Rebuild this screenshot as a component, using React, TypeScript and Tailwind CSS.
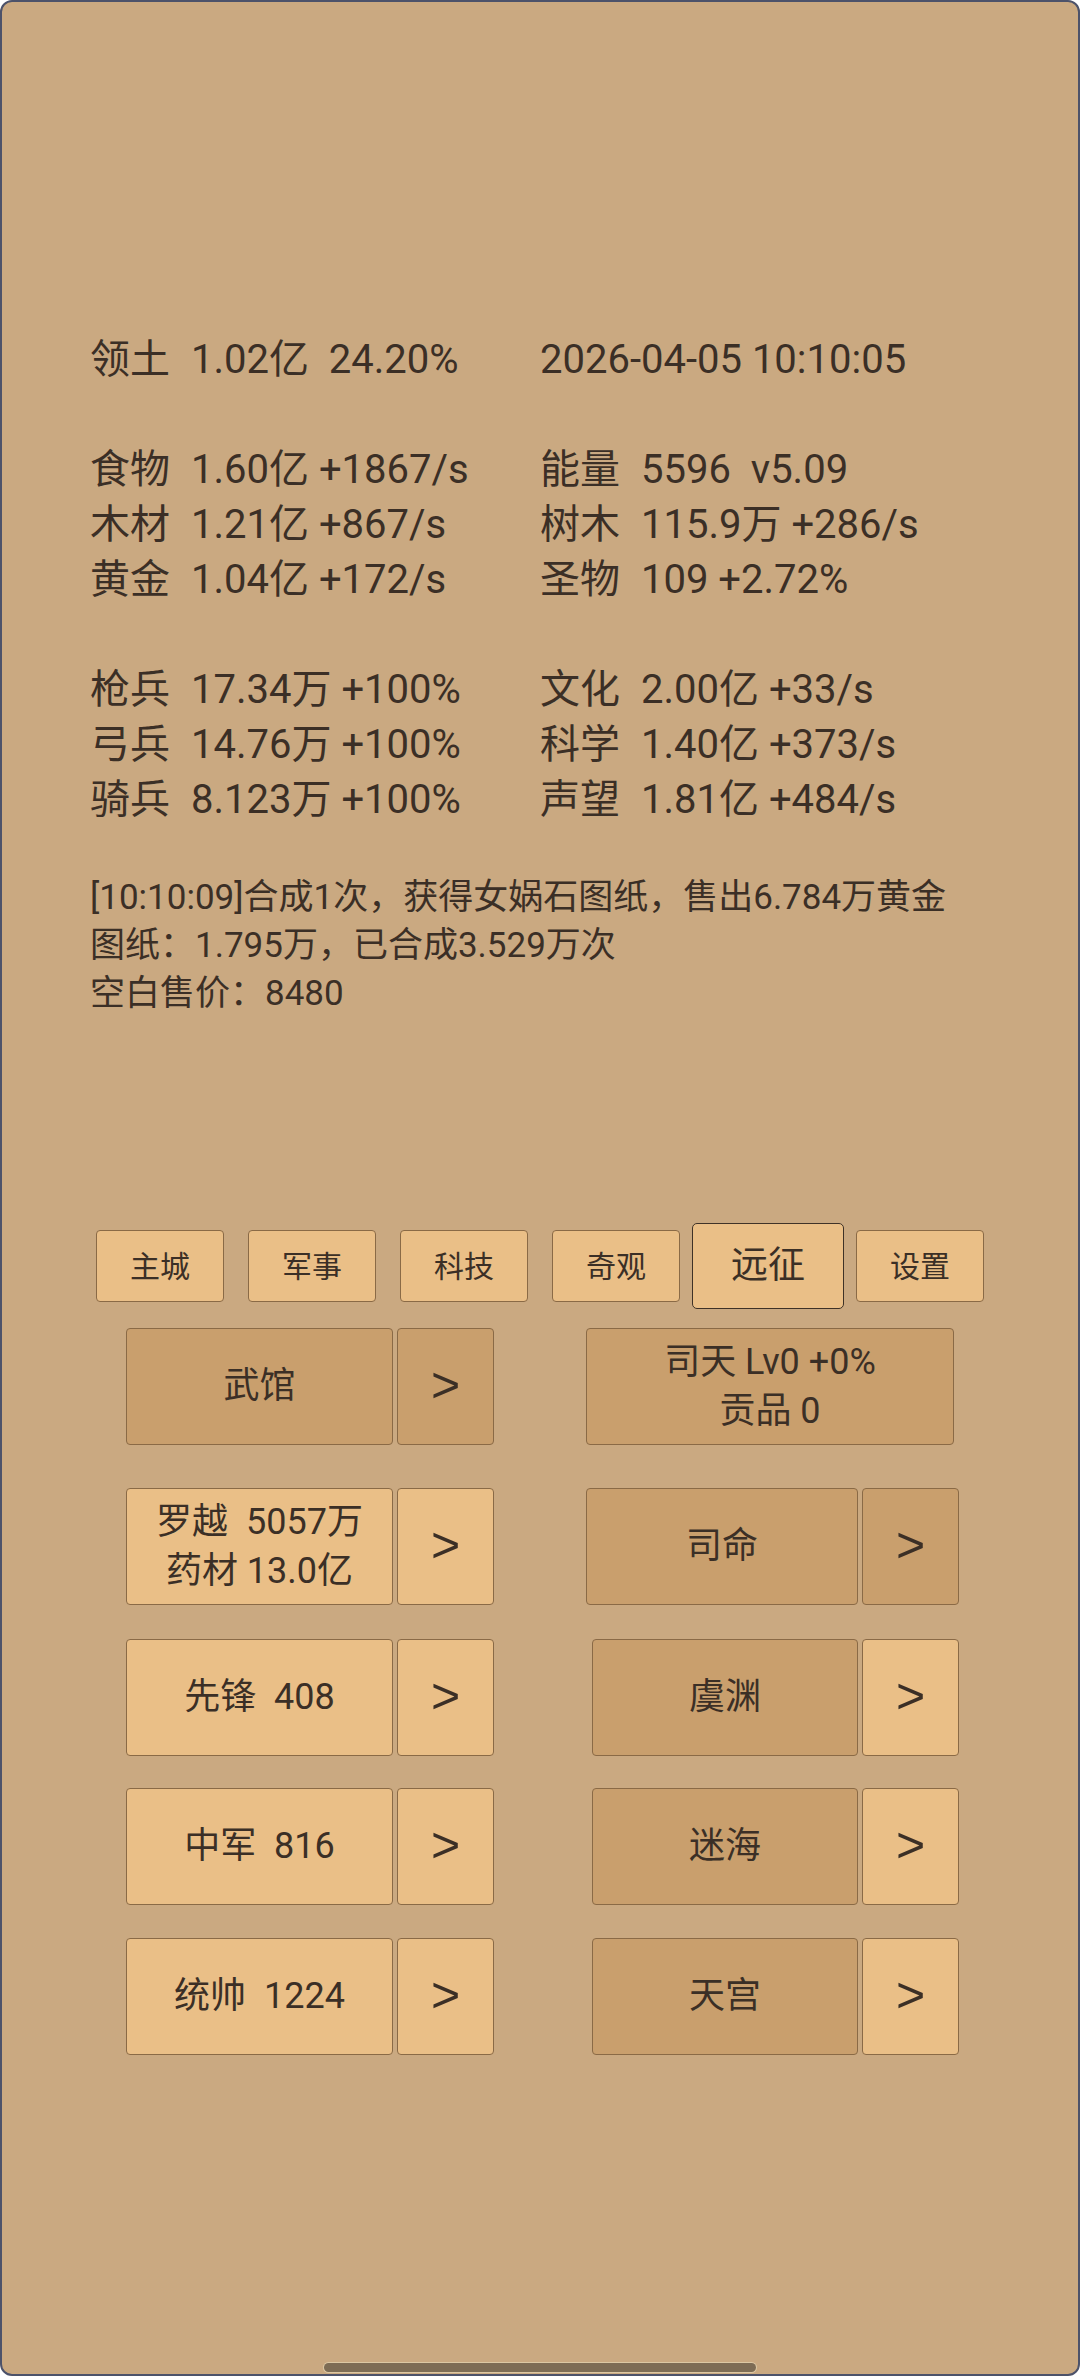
import React from "react";

type Cell = { label: string; value: string } | null;

const statLines: ([Cell, Cell] | null)[] = [
  [{ label: "领土", value: "1.02亿  24.20%" }, { label: "", value: "2026-04-05 10:10:05" }],
  null,
  [{ label: "食物", value: "1.60亿 +1867/s" }, { label: "能量", value: "5596  v5.09" }],
  [{ label: "木材", value: "1.21亿 +867/s" }, { label: "树木", value: "115.9万 +286/s" }],
  [{ label: "黄金", value: "1.04亿 +172/s" }, { label: "圣物", value: "109 +2.72%" }],
  null,
  [{ label: "枪兵", value: "17.34万 +100%" }, { label: "文化", value: "2.00亿 +33/s" }],
  [{ label: "弓兵", value: "14.76万 +100%" }, { label: "科学", value: "1.40亿 +373/s" }],
  [{ label: "骑兵", value: "8.123万 +100%" }, { label: "声望", value: "1.81亿 +484/s" }],
];

function StatCell({ c }: { c: Cell }) {
  if (!c) return null;
  return (
    <div className="flex whitespace-pre">
      {c.label ? <span className="inline-block w-[101px]">{c.label}</span> : null}
      <span>{c.value}</span>
    </div>
  );
}

const tabs = ["主城", "军事", "科技", "奇观", "远征", "设置"];

const LIGHT = "bg-[#eabf87]";
const DARK = "bg-[#c99f6d]";

function Box({
  tone,
  w,
  children,
  big,
}: {
  tone: "light" | "dark";
  w: string;
  children: React.ReactNode;
  big?: boolean;
}) {
  return (
    <div
      className={
        "h-[117px] flex flex-col items-center justify-center border border-[#8a6a46] rounded-[4px] " +
        (tone === "light" ? LIGHT : DARK) +
        " " +
        w +
        " " +
        (big
          ? "text-[50px] leading-none font-['Liberation_Sans',sans-serif]"
          : "text-[36px] leading-[49px]")
      }
    >
      {children}
    </div>
  );
}

function Arrow({ tone }: { tone: "light" | "dark" }) {
  return (
    <Box tone={tone} w="w-[97px]" big>
      <span className="-mt-[4px]">&gt;</span>
    </Box>
  );
}

export default function App() {
  return (
    <div className="w-[1080px] h-[2376px] relative overflow-hidden bg-[#caa981] border-2 border-[#4c526a] rounded-[12px] text-[#3b2f26] font-['Roboto','Noto_Sans_CJK_SC',sans-serif]">
      {/* stats */}
      <div className="pt-[330px] pl-[88px] text-[40px] leading-[55px]">
        {statLines.map((line, i) =>
          line ? (
            <div key={i} className="flex h-[55px]">
              <div className="w-[450px]">
                <StatCell c={line[0]} />
              </div>
              <div>
                <StatCell c={line[1]} />
              </div>
            </div>
          ) : (
            <div key={i} className="h-[55px]" />
          )
        )}
      </div>

      {/* log */}
      <div className="mt-[47px] pl-[88px] text-[35px] leading-[48px] whitespace-pre">
        <div>[10:10:09]合成1次，获得女娲石图纸，售出6.784万黄金</div>
        <div>图纸：1.795万，已合成3.529万次</div>
        <div>空白售价：8480</div>
      </div>

      {/* tabs */}
      <div className="mt-[205px] flex items-center justify-center h-[86px]">
        {tabs.map((t) =>
          t === "远征" ? (
            <div
              key={t}
              className="w-[152px] h-[86px] flex items-center justify-center bg-[#eabf87] border border-[#3f3227] rounded-[5px] text-[37px]"
            >
              {t}
            </div>
          ) : (
            <div
              key={t}
              className="mx-[12px] w-[128px] h-[72px] flex items-center justify-center bg-[#eabf87] border border-[#8a6a46] rounded-[4px] text-[30px]"
            >
              {t}
            </div>
          )
        )}
      </div>

      {/* grid */}
      <div className="mt-[19px] pl-[124px] flex flex-col">
        {/* row 1 */}
        <div className="flex">
          <div className="flex gap-[4px]">
            <Box tone="dark" w="w-[267px]">武馆</Box>
            <Arrow tone="dark" />
          </div>
          <div className="ml-[92px]">
            <Box tone="dark" w="w-[368px]">
              <span className="whitespace-pre">司天 Lv0 +0%</span>
              <span className="whitespace-pre">贡品 0</span>
            </Box>
          </div>
        </div>

        {/* row 2 */}
        <div className="flex mt-[43px]">
          <div className="flex gap-[4px]">
            <Box tone="light" w="w-[267px]">
              <span className="whitespace-pre">罗越  5057万</span>
              <span className="whitespace-pre">药材 13.0亿</span>
            </Box>
            <Arrow tone="light" />
          </div>
          <div className="ml-[92px] flex gap-[4px]">
            <Box tone="dark" w="w-[272px]">司命</Box>
            <Arrow tone="dark" />
          </div>
        </div>

        {[
          ["先锋  408", "虞渊", "mt-[34px]"],
          ["中军  816", "迷海", "mt-[32px]"],
          ["统帅  1224", "天宫", "mt-[33px]"],
        ].map(([l, r, m]) => (
          <div key={l} className={"flex " + m}>
            <div className="flex gap-[4px]">
              <Box tone="light" w="w-[267px]">
                <span className="whitespace-pre">{l}</span>
              </Box>
              <Arrow tone="light" />
            </div>
            <div className="ml-[98px] flex gap-[4px]">
              <Box tone="dark" w="w-[266px]">{r}</Box>
              <Arrow tone="light" />
            </div>
          </div>
        ))}
      </div>

      {/* home indicator */}
      <div className="absolute left-[322px] bottom-[2px] w-[432px] h-[9px] rounded-full bg-[#7d6c55] ring-1 ring-[#dcc8a4]" />
    </div>
  );
}
